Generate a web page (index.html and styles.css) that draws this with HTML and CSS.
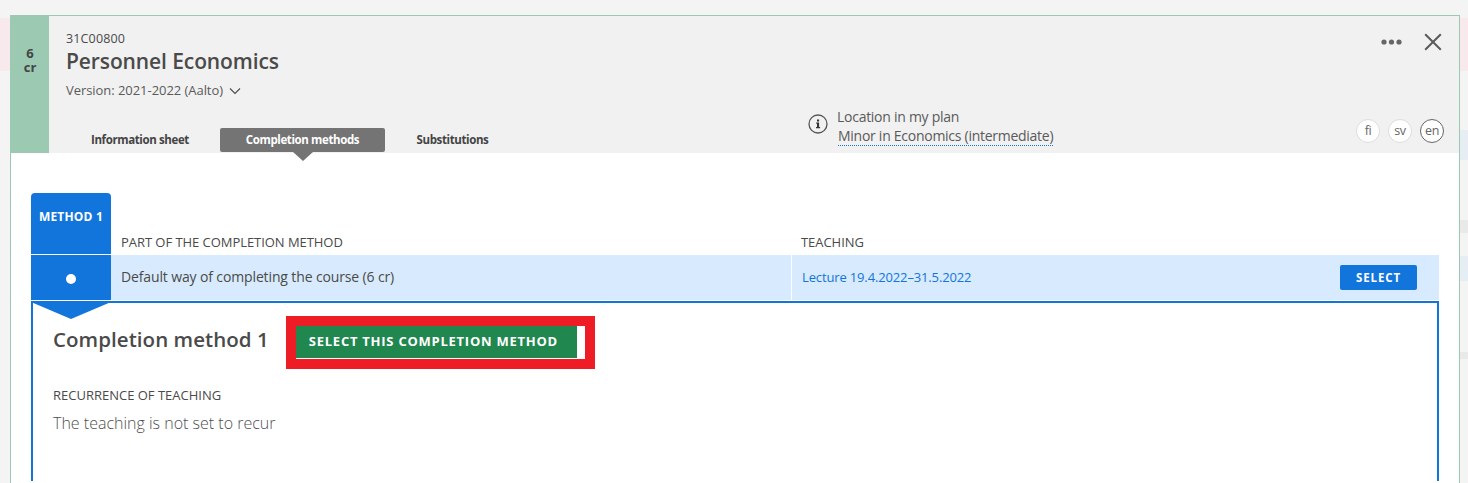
FILE: index.html
```html
<!DOCTYPE html>
<html lang="en">
<head>
<meta charset="utf-8">
<title>Personnel Economics</title>
<link rel="stylesheet" href="styles.css">
</head>
<body>
<div class="modal">
  <header class="head">
    <div class="credits"><span>6</span><span>cr</span></div>
    <div class="head-main">
      <div class="head-top">
        <div class="titles">
          <div class="code">31C00800</div>
          <h1 class="title">Personnel Economics</h1>
          <div class="version">Version: 2021-2022 (Aalto)
            <svg class="chev" width="12" height="8" viewBox="0 0 12 8"><path d="M1 1.5l5 5 5-5" fill="none" stroke="#4a4a4a" stroke-width="1.1"/></svg>
          </div>
        </div>
        <div class="actions">
          <svg width="21" height="6" viewBox="0 0 21 6"><circle cx="3" cy="3" r="2.6" fill="#666"/><circle cx="10.5" cy="3" r="2.6" fill="#666"/><circle cx="18" cy="3" r="2.6" fill="#666"/></svg>
          <svg width="18" height="18" viewBox="0 0 18 18"><path d="M1.2 1.2l15.6 15.6M16.8 1.2L1.2 16.8" fill="none" stroke="#5a5a5a" stroke-width="2"/></svg>
        </div>
      </div>
      <div class="head-bottom">
        <nav class="tabs">
          <a class="tab">Information sheet</a>
          <a class="tab active">Completion methods</a>
          <a class="tab">Substitutions</a>
        </nav>
        <div class="plan">
          <svg class="info" width="20" height="20" viewBox="0 0 20 20"><circle cx="10" cy="10" r="9" fill="none" stroke="#555" stroke-width="1.3"/><path d="M8.2 8.6h2.9v4.5h1v1.2H8v-1.2h1V9.8H8.2zM9 5.4h2.1v2H9z" fill="#333"/></svg>
          <div>
            <div class="plan-label">Location in my plan</div>
            <a class="plan-link">Minor in Economics (intermediate)</a>
          </div>
        </div>
        <div class="langs">
          <span class="lang">fi</span>
          <span class="lang">sv</span>
          <span class="lang current">en</span>
        </div>
      </div>
    </div>
  </header>
  <main class="body">
    <div class="grid">
      <div class="method-tab">METHOD 1</div>
      <div class="col-label part-label">PART OF THE COMPLETION METHOD</div>
      <div class="col-label">TEACHING</div>
      <div class="marker"><i class="dot"></i></div>
      <div class="cell">Default way of completing the course (6 cr)</div>
      <div class="cell cell-teach">
        <a class="lecture">Lecture 19.4.2022–31.5.2022</a>
        <button class="select">SELECT</button>
      </div>
    </div>
    <section class="detail">
      <span class="pointer"></span>
      <div class="detail-head">
        <h2 class="detail-title">Completion method 1</h2>
        <div class="highlight"><button class="select-method">SELECT THIS COMPLETION METHOD</button></div>
      </div>
      <h3 class="rec-label">RECURRENCE OF TEACHING</h3>
      <p class="rec-text">The teaching is not set to recur</p>
    </section>
  </main>
</div>
</body>
</html>
```
FILE: styles.css
```css
* { box-sizing: border-box; }
html, body { margin: 0; height: 483px; overflow: hidden; }
body {
  padding: 15px 8px 0 10px;
  font-family: "Open Sans", "Noto Sans", sans-serif;
  color: #4a4a4a;
  background:
    linear-gradient(#f8e9ed, #f8e9ed) 0 18px / 10px 53px no-repeat,
    linear-gradient(#f8e9ed, #f8e9ed) right 18px / 8px 53px no-repeat,
    linear-gradient(#e6edf3, #e6edf3) right 130px / 8px 30px no-repeat,
    linear-gradient(#e9e9e9, #e9e9e9) right 220px / 8px 13px no-repeat,
    linear-gradient(#e6edf3, #e6edf3) right 256px / 8px 25px no-repeat,
    linear-gradient(#e9e9e9, #e9e9e9) right 352px / 8px 7px no-repeat,
    #f4f4f4;
}
.modal {
  height: 480px;
  background: #fff;
  border: 1px solid #9cc9b2;
}
.head { display: flex; height: 137px; background: #f1f1f1; }
.credits {
  width: 38px;
  background: #9cc9b2;
  display: flex;
  flex-direction: column;
  align-items: center;
  padding-top: 30px;
  font-size: 13px;
  line-height: 14px;
  font-weight: 700;
  color: #444;
}
.head-main { flex: 1; display: flex; flex-direction: column; min-width: 0; }
.head-top { display: flex; justify-content: space-between; height: 100px; padding: 15px 17px 0 17px; }
.code { font-size: 12.5px; line-height: 16px; letter-spacing: .15px; }
.title { margin: 0; font-size: 21px; line-height: 28px; font-weight: 600; letter-spacing: -.1px; color: #4a4a4a; }
.version { margin-top: 6px; font-size: 13px; line-height: 18px; letter-spacing: -.05px; color: #5a5a5a; display: flex; align-items: center; gap: 6px; }
.chev { margin-top: 2px; }
.actions { display: flex; align-items: center; gap: 22px; height: 24px; margin-top: -1px; }
.head-bottom { flex: 1; display: flex; padding-left: 17px; }
.tabs { display: flex; align-items: flex-start; padding-top: 12px; width: 742px; }
.tab {
  height: 24px;
  line-height: 24px;
  font-size: 11.5px;
  font-weight: 700;
  letter-spacing: -.38px;
  color: #444;
  text-align: center;
  border-radius: 2px;
  position: relative;
}
.tab:nth-child(1) { width: 148px; margin-right: 6px; }
.tab:nth-child(2) { width: 165px; }
.tab:nth-child(3) { width: 135px; }
.tab.active { background: #747474; color: #fff; }
.tab.active::after {
  content: "";
  position: absolute;
  left: 50%;
  top: 100%;
  margin-left: -10px;
  border: 10px solid transparent;
  border-top-width: 9px;
  border-bottom-width: 0;
  border-top-color: #747474;
}
.plan { display: flex; align-items: flex-start; gap: 9px; height: 37px; margin-top: -9px; }
.info { margin-top: 7px; }
.plan-label, .plan-link { font-size: 14px; letter-spacing: -.27px; color: #5a5a5a; display: block; white-space: nowrap; }
.plan-label { line-height: 19px; }
.plan-link { border-bottom: 1px dotted #1275dc; line-height: 19px; margin-left: 1px; }
.langs { margin-left: auto; display: flex; gap: 8px; padding: 3px 15px 0 0; height: 32px; }
.lang {
  width: 24px;
  height: 24px;
  border-radius: 50%;
  background: #fff;
  border: 1px solid #ddd;
  font-size: 12.5px;
  letter-spacing: -.4px;
  line-height: 21px;
  text-align: center;
  color: #666;
}
.lang.current { border-color: #666; }
.body { padding: 40px 20px 0; }
.grid { display: grid; grid-template-columns: 80px 680px 648px; grid-template-rows: 61px 45px; row-gap: 1px; }
.method-tab {
  background: #1275dc;
  border-radius: 4px 4px 0 0;
  color: #fff;
  font-size: 12px;
  font-weight: 700;
  letter-spacing: .2px;
  text-align: center;
  padding-top: 15px;
  line-height: 18px;
  white-space: nowrap;
}
.col-label { align-self: end; padding: 0 0 3px 10px; font-size: 13px; line-height: 18px; letter-spacing: -.05px; color: #4a4a4a; }
.marker { background: #1275dc; display: flex; align-items: center; justify-content: center; }
.dot { width: 10px; height: 10px; border-radius: 50%; background: #fff; margin-top: 2px; }
.cell { background: #d8eafd; display: flex; align-items: center; padding: 0 0 2px 10px; font-size: 14px; letter-spacing: -.13px; color: #4a4a4a; }
.cell-teach { justify-content: space-between; padding: 0 22px 0 10px; border-left: 1px solid #fff; }
.lecture { color: #1275dc; font-size: 13px; letter-spacing: -.14px; margin-bottom: 2px; }
.select {
  width: 77px;
  height: 25px;
  padding: 0;
  border: 0;
  border-radius: 2px;
  background: #1275dc;
  color: #fff;
  font: 700 11.5px/25px "Open Sans", sans-serif;
  letter-spacing: .9px;
}
.detail {
  position: relative;
  height: 180px;
  margin-top: 1px;
  border: 2px solid #1275dc;
  border-bottom: 0;
  padding: 13px 20px 0;
}
.pointer {
  position: absolute;
  left: -2px;
  top: -1px;
  border-style: solid;
  border-width: 17px 40px 0;
  border-color: #1275dc transparent transparent;
}
.detail-head { display: flex; align-items: flex-start; gap: 17px; }
.detail-title { margin: 9px 0 0; font-size: 20.5px; line-height: 28px; font-weight: 600; letter-spacing: .05px; color: #4a4a4a; white-space: nowrap; }
.highlight { background: #fff; border: 10px solid #ee1c25; width: 309px; height: 53px; flex: none; }
.select-method {
  display: block;
  width: 281px;
  height: 32px;
  padding: 0 0 2px 13px;
  border: 0;
  background: #20874e;
  color: #fff;
  font: 700 13px/30px "Open Sans", sans-serif;
  letter-spacing: .75px;
  text-align: left;
  white-space: nowrap;
}
.rec-label { margin: 17px 0 0; font-size: 13px; line-height: 18px; font-weight: 400; color: #4a4a4a; }
.rec-text { margin: 8px 0 0; font-size: 16px; line-height: 22px; font-weight: 300; color: #4f4f4f; }
```
